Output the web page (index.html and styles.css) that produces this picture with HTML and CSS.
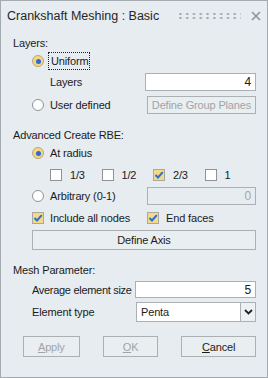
FILE: index.html
```html
<!DOCTYPE html>
<html>
<head>
    <meta charset="utf-8">
    <title>Crankshaft Meshing : Basic</title>
    <link rel="stylesheet" href="styles.css">
</head>
<body>
<div class="window">
    <div class="titlebar">
        <span class="title">Crankshaft Meshing : Basic</span>
        <span class="grip"></span>
        <svg class="close" width="10" height="10" viewBox="0 0 10 10"><path d="M1 1L9 9M9 1L1 9" stroke="#8c959b" stroke-width="1.6"/></svg>
    </div>

    <div class="row label-row first">Layers:</div>
    <div class="row opt uni">
        <span class="radio on"></span><span class="focus">Uniform</span>
    </div>
    <div class="row field layers">
        <span class="lbl">Layers</span>
        <span class="input w110">4</span>
    </div>
    <div class="row opt userdef">
        <span class="radio"></span><span class="txt">User defined</span>
        <span class="btn disabled w109">Define Group Planes</span>
    </div>

    <div class="row label-row adv">Advanced Create RBE:</div>
    <div class="row opt atr">
        <span class="radio on"></span><span class="txt">At radius</span>
    </div>
    <div class="row fracs">
        <span class="frac"><span class="check"></span>1/3</span>
        <span class="frac"><span class="check"></span>1/2</span>
        <span class="frac"><span class="check on"><svg width="10" height="10" viewBox="0 0 10 10"><path d="M1.5 5L4 7.5L8.8 2.2" fill="none" stroke="#2a6fd2" stroke-width="2"/></svg></span>2/3</span>
        <span class="frac"><span class="check"></span>1</span>
    </div>
    <div class="row opt arb">
        <span class="radio"></span><span class="txt">Arbitrary (0-1)</span>
        <span class="input disabled w109">0</span>
    </div>
    <div class="row opt incl">
        <span class="check on"><svg width="10" height="10" viewBox="0 0 10 10"><path d="M1.5 5L4 7.5L8.8 2.2" fill="none" stroke="#2a6fd2" stroke-width="2"/></svg></span><span class="txt">Include all nodes</span>
        <span class="endf"><span class="check on"><svg width="10" height="10" viewBox="0 0 10 10"><path d="M1.5 5L4 7.5L8.8 2.2" fill="none" stroke="#2a6fd2" stroke-width="2"/></svg></span>End faces</span>
    </div>
    <div class="row axis">
        <span class="btn wide">Define Axis</span>
    </div>

    <div class="row label-row mesh">Mesh Parameter:</div>
    <div class="row param avg">
        <span class="lbl">Average element size</span>
        <span class="input w121">5</span>
    </div>
    <div class="row param elem">
        <span class="lbl">Element type</span>
        <span class="select"><span class="val">Penta</span><span class="arrow"><svg width="9" height="6" viewBox="0 0 9 6"><path d="M1 1L4.5 4.5L8 1" fill="none" stroke="#222" stroke-width="1.8"/></svg></span></span>
    </div>

    <div class="row actions">
        <span class="btn disabled apply"><u>A</u>pply</span>
        <span class="btn disabled ok"><u>O</u>K</span>
        <span class="btn cancel"><u>C</u>ancel</span>
    </div>
</div>
</body>
</html>
```

FILE: styles.css
```css
* { box-sizing: border-box; }
html, body { margin: 0; padding: 0; }
body { background: #e6ecf0; }

.window {
    width: 268px; height: 378px;
    border: 1px solid #a3abb1;
    background: #e6ecf0;
    font-family: "Liberation Sans", Arial, sans-serif;
    font-size: 11px; color: #1b1b1b;
    letter-spacing: -0.15px;
    padding-right: 11px;
    white-space: nowrap;
}

.titlebar { height: 29px; display: flex; align-items: center; padding-left: 6px; }
.title { font-size: 12.5px; color: #262626; letter-spacing: 0; }
.grip {
    width: 64px; height: 8px; margin-left: auto; margin-top: 1px;
    background: radial-gradient(circle, #9aa3a9 0.9px, transparent 1.3px) 0 0 / 6.8px 4px;
}
.close { margin-left: 10px; margin-right: -5px; margin-top: 1px; }

.row { display: flex; align-items: center; }
.label-row { padding-left: 12px; height: 16px; }
.first { margin-top: 5px; }
.opt { padding-left: 31px; height: 16px; }
.opt .txt { margin-left: 6px; }
.field { padding-left: 49px; height: 18px; }
.field .lbl, .param .lbl { flex: 1; }
.avg .lbl { letter-spacing: -0.3px; }

.radio {
    width: 12px; height: 12px; border-radius: 50%;
    border: 1px solid #8d9398; background: #fff;
    display: inline-flex; align-items: center; justify-content: center;
    flex: none;
}
.radio.on { background: #f5d680; border-color: #b8a878; }
.radio.on::after {
    content: ""; width: 5px; height: 5px; border-radius: 50%; background: #2d6ad6;
}
.uni { margin-top: 2px; }
.focus { margin-left: 4px; padding: 1px 1px 1px 2px; border: 1px dotted #222; line-height: 14px; }

.check {
    width: 12px; height: 12px; border: 1px solid #8e9296; background: #fff;
    display: inline-flex; align-items: center; justify-content: center; flex: none;
}
.check.on { background: #f5d98a; border-color: #a8a8a0; }

.input {
    height: 18px; background: #fff; border: 1px solid #abb0b4;
    text-align: right; padding: 0 4px; line-height: 16px; margin-left: auto;
    font-size: 12px;
}
.input.disabled { background: #e6ecf0; color: #a3a7aa; }
.w110 { width: 111px; }
.w109 { width: 109px; }
.w121 { width: 121px; }

.btn {
    height: 18px; border: 1px solid #acb0b3; background: #e9eef1;
    display: inline-flex; align-items: center; justify-content: center;
}
.btn.disabled { color: #a0a4a7; }
.userdef .btn { margin-left: auto; }

.layers { margin-top: 4px; }
.userdef { margin-top: 5px; height: 18px; }
.adv { margin-top: 13px; }
.atr { margin-top: 2px; }
.fracs { margin-top: 6px; padding-left: 49px; height: 16px; }
.frac { width: 53px; display: inline-flex; align-items: center; gap: 8px; }
.arb { margin-top: 4px; height: 18px; }
.incl { margin-top: 5px; }
.endf { margin-left: auto; width: 109px; display: inline-flex; align-items: center; gap: 7px; }
.axis { margin-top: 4px; padding-left: 31px; }
.btn.wide { width: 100%; height: 20px; }

.mesh { margin-top: 12px; }
.param { padding-left: 31px; }
.avg { margin-top: 3px; height: 17px; }
.avg .input { height: 17px; }
.elem { margin-top: 4px; height: 20px; }
.select {
    width: 120px; height: 20px; border: 1px solid #abb0b4; background: #fff;
    display: flex;
}
.select .val { flex: 1; padding-left: 4px; line-height: 18px; }
.select .arrow {
    width: 15px; border-left: 1px solid #abb0b4; background: #eef1f3;
    display: flex; align-items: center; justify-content: center;
}

.actions { margin-top: 14px; padding-left: 22px; gap: 23px; }
.actions .btn { height: 21px; }
.apply { width: 57px; }
.ok { width: 56px; }
.cancel { width: 75px; }
```
